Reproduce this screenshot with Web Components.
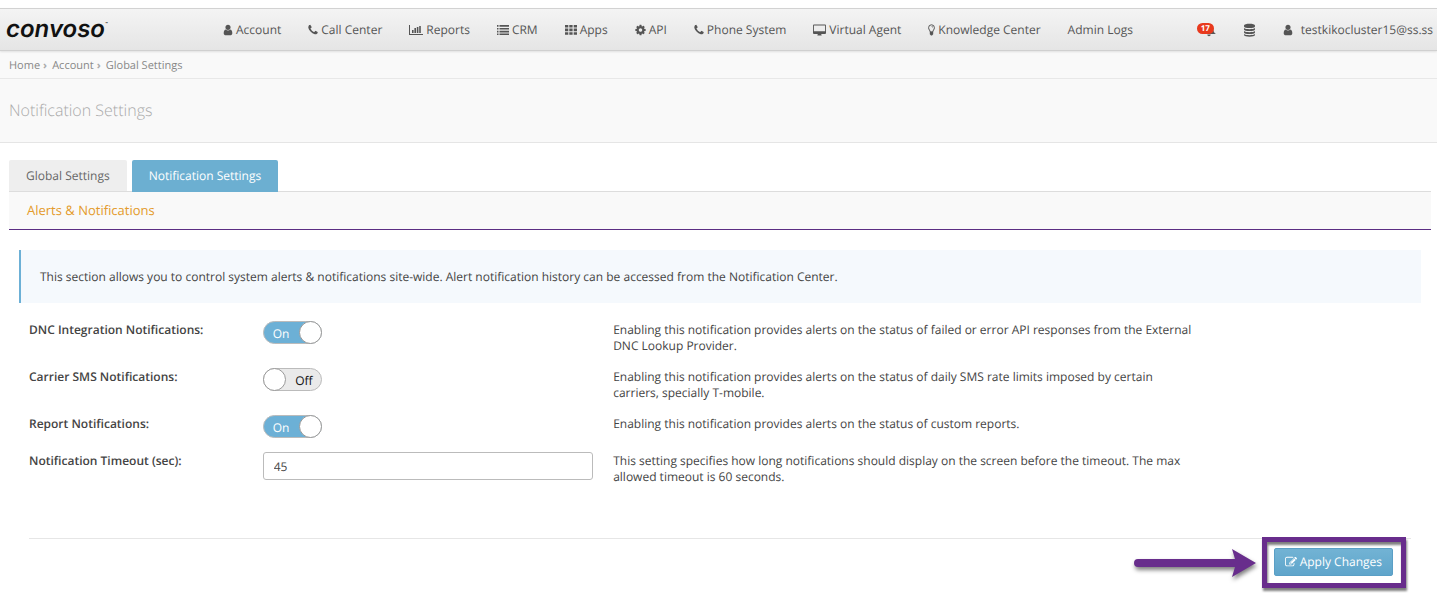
<!DOCTYPE html>
<html lang="en">
<head>
<meta charset="utf-8">
<title>Notification Settings</title>
<style>
    body {
        margin: 0;
        background: #fff;
        color: #444;
        font-family: "Open Sans", "Noto Sans", sans-serif;
        font-size: 12px;
        line-height: 16px;
        text-rendering: geometricPrecision;
    }
    app-header { margin-top: 8px; }
</style>
</head>
<body>
    <app-header>
        <nav-item icon="user">Account</nav-item>
        <nav-item icon="phone">Call Center</nav-item>
        <nav-item icon="chart">Reports</nav-item>
        <nav-item icon="list">CRM</nav-item>
        <nav-item icon="grid">Apps</nav-item>
        <nav-item icon="cog">API</nav-item>
        <nav-item icon="phone">Phone System</nav-item>
        <nav-item icon="desktop">Virtual Agent</nav-item>
        <nav-item icon="bulb">Knowledge Center</nav-item>
        <nav-item>Admin Logs</nav-item>
        <user-menu slot="user" count="17">testkikocluster15@ss.ss</user-menu>
    </app-header>
    <bread-crumbs>
        <a href="#">Home</a>
        <a href="#">Account</a>
        <a href="#">Global Settings</a>
    </bread-crumbs>
    <page-title>Notification Settings</page-title>
    <settings-tabs>
        <a href="#">Global Settings</a>
        <a href="#" class="active">Notification Settings</a>
        <a href="#" slot="sub">Alerts &amp; Notifications</a>
    </settings-tabs>
    <settings-panel>
        <info-note slot="note">This section allows you to control system alerts &amp; notifications site-wide. Alert notification history can be accessed from the Notification Center.</info-note>
        <setting-row type="switch" label="DNC Integration Notifications:" on>Enabling this notification provides alerts on the status of failed or error API responses from the External DNC Lookup Provider.</setting-row>
        <setting-row type="switch" label="Carrier SMS Notifications:">Enabling this notification provides alerts on the status of daily SMS rate limits imposed by certain carriers, specially T-mobile.</setting-row>
        <setting-row type="switch" label="Report Notifications:" on>Enabling this notification provides alerts on the status of custom reports.</setting-row>
        <setting-row type="text" label="Notification Timeout (sec):" value="45">This setting specifies how long notifications should display on the screen before the timeout. The max allowed timeout is 60 seconds.</setting-row>
        <action-bar slot="actions">Apply Changes</action-bar>
    </settings-panel>

<script>
const ICONS = {
    user: [ '256 0 1280 1792', 10, '<path d="M1536 1399q0 109-62.5 187t-150.5 78h-854q-88 0-150.5-78t-62.5-187q0-85 8.5-160.5t31.5-152 58.5-131 94-89 134.5-34.5q131 128 313 128t313-128q76 0 134.5 34.5t94 89 58.5 131 31.5 152 8.5 160.5zm-256-887q0 159-112.5 271.5t-271.5 112.5-271.5-112.5-112.5-271.5 112.5-271.5 271.5-112.5 271.5 112.5 112.5 271.5z"/>' ],
    phone: [ '192 0 1408 1792', 10, '<path d="M1600 1240q0 27-10 70.5t-21 68.5q-21 50-122 106-94 51-186 51-27 0-53-3.5t-57.5-12.5-47-14.5-55.5-20.5-49-18q-98-35-175-83-127-79-264-216t-216-264q-48-77-83-175-3-9-18-49t-20.5-55.5-14.5-47-12.5-57.5-3.5-53q0-92 51-186 56-101 106-122 25-11 68.5-21t70.5-10q14 0 21 3 18 6 53 76 11 19 30 54t35 63.5 31 53.5q3 4 17.5 25t21.5 35.5 7 28.5q0 20-28.5 50t-62 55-62 53-28.5 46q0 9 5 22.5t8.5 20.5 14 24 11.5 19q76 137 174 235t235 174q2 1 19 11.5t24 14 20.5 8.5 22.5 5q18 0 46-28.5t53-62 55-62 50-28.5q14 0 28.5 7t35.5 21.5 25 17.5q25 15 53.5 31t63.5 35 54 30q70 35 76 53 3 7 3 21z"/>' ],
    cog: [ '128 0 1536 1792', 11, '<path d="M1152 896q0-106-75-181t-181-75-181 75-75 181 75 181 181 75 181-75 75-181zm512-109v222q0 12-8 23t-20 13l-185 28q-19 54-39 91 35 50 107 138 10 12 10 25t-9 23q-27 37-99 108t-94 71q-12 0-26-9l-138-108q-44 23-91 38-16 136-29 186-7 28-36 28h-222q-14 0-24.5-8.5t-11.5-21.5l-28-184q-49-16-90-37l-141 107q-10 9-25 9-14 0-25-11-126-114-165-168-7-10-7-23 0-12 8-23 15-21 51-66.5t54-70.5q-27-50-41-99l-183-27q-13-2-21-12.5t-8-23.5v-222q0-12 8-23t19-13l186-28q14-46 39-92-40-57-107-138-10-12-10-24 0-10 9-23 26-36 98.5-107.5t94.5-71.5q13 0 26 10l138 107q44-23 91-38 16-136 29-186 7-28 36-28h222q14 0 24.5 8.5t11.5 21.5l28 184q49 16 90 37l142-107q9-9 24-9 13 0 25 10 129 119 165 170 7 8 7 22 0 12-8 23-15 21-51 66.5t-54 70.5q26 50 41 98l183 28q13 2 21 12.5t8 23.5z"/>' ],
    edit: [ '0 0 1792 1792', 12, '<path d="M888 1184l116-116-152-152-116 116v56h96v96h56zm440-720q-16-16-33 1l-350 350q-17 17-1 33t33-1l350-350q17-17 1-33zm80 594v190q0 119-84.5 203.5t-203.5 84.5h-832q-119 0-203.5-84.5t-84.5-203.5v-832q0-119 84.5-203.5t203.5-84.5h832q63 0 117 25 15 7 18 23 3 17-9 29l-49 49q-14 14-32 8-23-6-45-6h-832q-66 0-113 47t-47 113v832q0 66 47 113t113 47h832q66 0 113-47t47-113v-126q0-13 9-22l64-64q15-15 35-7t20 29zm-96-738l288 288-672 672h-288v-288zm444 132l-92 92-288-288 92-92q28-28 68-28t68 28l152 152q28 28 28 68t-28 68z"/>' ],
    chart: [ '0 0 14 12', 14, '<path d="M0 1h1v9h13v1H0zM3 6h1.600v3H3zM5.400 4H7v5H5.400zM7.800 3h1.600v6H7.800zM10.200 2h1.600v7h-1.600z"/>' ],
    list: [ '0 0 12 12', 12, '<path d="M0 1h1.500v1.700H0zM2.500 1H12v1.700H2.500zM0 3.900h1.500v1.700H0zM2.500 3.900H12v1.700H2.500zM0 6.700h1.500v1.700H0zM2.500 6.700H12v1.700H2.500zM0 9.500h1.500v1.600H0zM2.500 9.500H12v1.600H2.500z"/>' ],
    grid: [ '0 0 12 12', 12, '<path d="M0 1h3.300v2.600H0zM4.300 1h3.300v2.600H4.300zM8.700 1H12v2.600H8.700zM0 4.600h3.300v2.600H0zM4.300 4.600h3.300v2.600H4.300zM8.700 4.600H12v2.600H8.700zM0 8.200h3.300v2.600H0zM4.300 8.200h3.300v2.600H4.300zM8.700 8.200H12v2.600H8.700z"/>' ],
    desktop: [ '0 0 13 12', 13, '<path fill-rule="evenodd" d="M1 .5h11a1 1 0 0 1 1 1v7.400a1 1 0 0 1-1 1H8.200l.5 1.600h-4.400l.5-1.600H1a1 1 0 0 1-1-1V1.500a1 1 0 0 1 1-1zM.9 1.500v5.700h11.200V1.500z"/>' ],
    bulb: [ '0 0 7 12', 7, '<path d="M2.300 8C2.200 6.500.6 5.600.6 3.700a2.900 2.900 0 0 1 5.800 0C6.400 5.600 4.800 6.500 4.700 8z" fill="none" stroke="currentColor"/><path d="M1.800 7.800h3.400v2.400L4 11.500H3l-1.200-1.300zM3.500 2.200c.9 0 1.500.5 1.500 1.300h-.6c0-.5-.4-.8-.9-.8z"/>' ],
    database: [ '0 0 11 14', 11, '<path d="M0 2.500C0 .2 11 .2 11 2.500v1C11 5.600 0 5.600 0 3.500zM0 5c1.500 1.600 9.500 1.600 11 0v1.500c0 2-11 2-11 0zM0 8c1.500 1.600 9.500 1.600 11 0v1.500c0 2-11 2-11 0zM0 11c1.500 1.600 9.500 1.600 11 0v1c0 2.300-11 2.300-11 0z"/>' ],
    bell: [ '0 0 14 14', 14, '<path d="M7 1c3 0 4.300 2 4.300 5 0 2.600 1 4 2.700 5H0c1.700-1 2.700-2.400 2.700-5C2.700 3 4 1 7 1zM5.300 11.500h3.400c0 2.200-3.400 2.200-3.400 0z"/>' ]
};

function icon( name ) {
    if( !ICONS[name] ) return '';
    const [ box, width, body ] = ICONS[name];
    return `<svg viewBox="${box}" width="${width}" height="${name === 'database' || name === 'bell' ? 14 : 12}" fill="currentColor" aria-hidden="true">${body}</svg>`;
}

class BaseElement extends HTMLElement {
    constructor() {
        super();
        this.attachShadow( { mode: 'open' } );
    }

    render() {
        const template = document.createElement( 'template' );
        template.innerHTML = `<style>${this.getStyles()}</style>${this.getMarkup()}`;
        this.shadowRoot.replaceChildren( template.content.cloneNode( true ) );
    }

    connectedCallback() { this.render() }
}

class AppHeader extends BaseElement {
    getMarkup() {
        return `
            <a class="logo" href="#" aria-label="Convoso home">convoso<sup>™</sup></a>
            <nav><slot></slot></nav>
            <slot name="user"></slot>
        `
    }

    getStyles() {
        return `
            :host {
                display: flex;
                align-items: center;
                height: 41px;
                border-top: 1px solid #d2d2d2;
                border-bottom: 1px solid #d0d0d0;
                background: linear-gradient(#f4f4f4, #e5e5e5);
                box-shadow: 0 1px 2px rgba(0,0,0,.1);
                position: relative;
            }
            .logo {
                flex: 0 0 204px;
                padding-left: 6px;
                color: #111;
                font: italic 600 24px/24px Inter, sans-serif;
                text-decoration: none;
                padding-bottom: 2px;
            }
            sup {
                font-size: 4px;
                line-height: 4px;
                vertical-align: 12px;
            }
            nav { display: flex; }
            slot[name="user"] { display: block; margin-left: auto; }
        `
    }
}

class NavItem extends BaseElement {
    getMarkup() {
        return `<a href="#">${icon( this.getAttribute('icon') )}<span><slot></slot></span></a>`
    }

    getStyles() {
        return `
            :host { display: block; }
            a {
                display: flex;
                align-items: center;
                gap: 3px;
                padding: 0 14px 0 13px;
                color: #555;
                text-decoration: none;
                white-space: nowrap;
            }
        `
    }
}

class UserMenu extends BaseElement {
    getMarkup() {
        return `
            <a class="bell" href="#" aria-label="Notifications">${icon( 'bell' )}<span class="badge">${this.getAttribute('count')}</span></a>
            <a href="#" aria-label="Data">${icon( 'database' )}</a>
            <a class="account" href="#">${icon( 'user' )}<span><slot></slot></span></a>
        `
    }

    getStyles() {
        return `
            :host {
                display: flex;
                align-items: center;
                gap: 28px;
                padding-right: 4px;
            }
            a {
                display: flex;
                align-items: center;
                color: #555;
                text-decoration: none;
            }
            .bell { position: relative; }
            .badge {
                position: absolute;
                right: 2px;
                top: 0;
                padding: 0 4px;
                border-radius: 6px;
                background: #e8391d;
                color: #fff;
                font-size: 8px;
                font-weight: 700;
                line-height: 11px;
            }
            .account { gap: 8px; }
        `
    }
}

class BreadCrumbs extends BaseElement {
    getMarkup() { return `<nav aria-label="Breadcrumb"><slot></slot></nav>` }

    getStyles() {
        return `
            :host {
                display: block;
                padding: 7px 9px 4px;
                border-bottom: 1px solid #e8e8e8;
                background: #f9f9f9;
                font-size: 11px;
            }
            nav { display: flex; }
            ::slotted(a) {
                color: #888;
                text-decoration: none;
            }
            ::slotted(a:not(:last-child))::after {
                content: "›";
                padding: 0 5px 0 3px;
                color: #aaa;
                font-weight: 700;
            }
        `
    }
}

class PageTitle extends BaseElement {
    getMarkup() { return `<h1><slot></slot></h1>` }

    getStyles() {
        return `
            :host {
                display: block;
                padding: 19px 9px 20px;
                border-bottom: 1px solid #e5e5e5;
                background: #f9f9f9;
            }
            h1 {
                margin: 0;
                color: #aaa;
                font-size: 16px;
                font-weight: 300;
                line-height: 24px;
            }
        `
    }
}

class SettingsTabs extends BaseElement {
    getMarkup() {
        return `
            <div class="tabs"><slot></slot></div>
            <div class="sub"><slot name="sub"></slot></div>
        `
    }

    getStyles() {
        return `
            :host {
                display: block;
                margin: 17px 6px 0 9px;
            }
            .tabs {
                display: flex;
                gap: 5px;
                border-bottom: 1px solid #ddd;
            }
            ::slotted(a) {
                padding: 8px 17px 7px;
                border-radius: 2px 2px 0 0;
                background: #eee;
                color: #666;
                text-decoration: none;
            }
            ::slotted(a.active) {
                margin-bottom: -1px;
                padding-bottom: 8px;
                background: #6cafd1;
                color: #fff;
            }
            .sub {
                display: flex;
                border-bottom: 1px solid #5b2d83;
                background: #f9f9f9;
            }
            ::slotted([slot="sub"]) {
                padding: 10px 18px 11px;
                background: none;
                color: #e49b2b;
                font-size: 13px;
            }
        `
    }
}

class SettingsPanel extends BaseElement {
    getMarkup() {
        return `
            <slot name="note"></slot>
            <form><slot></slot></form>
            <slot name="actions"></slot>
        `
    }

    getStyles() {
        return `
            :host {
                display: block;
                padding: 20px 16px 24px 19px;
            }
            form {
                display: grid;
                gap: 14px;
                margin-top: 18px;
            }
        `
    }
}

class InfoNote extends BaseElement {
    getMarkup() { return `<slot></slot>` }

    getStyles() {
        return `
            :host {
                display: block;
                padding: 19px 19px 18px;
                border-left: 2px solid #6cb0d6;
                background: #f5f9fd;
            }
        `
    }
}

class SettingRow extends BaseElement {
    getMarkup() {
        return `
            <label for="field">${this.getAttribute('label')}</label>
            <div class="field">${this.getControl()}</div>
            <div class="text"><slot></slot></div>
        `
    }

    getControl() {
        if( this.getAttribute('type') === 'text' ) {
            return `<input id="field" type="text" value="${this.getAttribute('value')}">`
        }
        return `
            <label class="switch">
                <input id="field" type="checkbox" role="switch" ${this.hasAttribute('on') ? 'checked' : ''}>
                <span class="state">${this.hasAttribute('on') ? 'On' : 'Off'}</span>
                <span class="knob"></span>
            </label>
        `
    }

    handleChange( event ) {
        this.shadowRoot.querySelector('.state').textContent = event.target.checked ? 'On' : 'Off';
    }

    connectedCallback() {
        this.render();
        const box = this.shadowRoot.querySelector('input[type="checkbox"]');
        if( box ) box.addEventListener( 'change', e => this.handleChange( e ) );
    }

    getStyles() {
        return `
            :host {
                display: grid;
                grid-template-columns: 2fr 3fr 7fr;
                align-items: start;
            }
            label, .text { padding: 1px 10px 0; }
            .text { max-width: 580px; }
            label { font-weight: 600; }
            .field { padding: 0 10px; }
            input[type="text"] {
                display: block;
                box-sizing: border-box;
                width: 100%;
                height: 28px;
                padding: 1px 10px 0;
                border: 1px solid #bbb;
                border-radius: 3px;
                background: #fff;
                color: #444;
                font: inherit;
                text-rendering: inherit;
            }
            .switch {
                display: flex;
                align-items: center;
                justify-content: space-between;
                flex-direction: row-reverse;
                box-sizing: border-box;
                width: 59px;
                height: 23px;
                padding: 0;
                border: 1px solid #bbb;
                border-radius: 12px;
                background: #eaeaea;
                color: #111;
                font-weight: 400;
                cursor: pointer;
            }
            .switch input {
                position: absolute;
                opacity: 0;
                margin: 0;
            }
            .switch:has(:checked) {
                flex-direction: row;
                background: #6cb0d6;
                color: #fff;
            }
            .state { padding: 2px 8px 0 9px; }
            .knob {
                box-sizing: border-box;
                width: 23px;
                height: 23px;
                margin: -1px;
                border: 1px solid #999;
                border-radius: 50%;
                background: #fff;
            }
        `
    }
}

class ActionBar extends BaseElement {
    getMarkup() {
        return `
            <svg class="arrow" width="132" height="36" viewBox="0 0 132 36" aria-hidden="true">
                <path d="M8 15h97L102 5l24 14-24 14 3-10H8a4 4 0 0 1 0-8z" fill="#682d8c"/>
            </svg>
            <div class="marked">
                <button type="button">${icon( 'edit' )}<span><slot></slot></span></button>
            </div>
        `
    }

    getStyles() {
        return `
            :host {
                display: flex;
                align-items: center;
                justify-content: flex-end;
                gap: 12px;
                margin: 53px 10px 0;
                padding: 5px 18px 0 0;
                border-top: 1px solid #e6e6e6;
            }
            .arrow { filter: drop-shadow(1px 3px 2px rgba(0,0,0,.5)); }
            .marked { position: relative; }
            .marked::before {
                content: "";
                position: absolute;
                inset: -11px -13px -12px -12px;
                border: 5px solid #682d8c;
                filter: drop-shadow(1px 3px 1px rgba(0,0,0,.5));
                pointer-events: none;
            }
            button {
                display: flex;
                align-items: center;
                gap: 3px;
                height: 28px;
                padding: 0 10px;
                border: 1px solid #5a9fc6;
                border-radius: 2px;
                background: linear-gradient(#72b3d4, #5fa5cb);
                color: #fff;
                font: inherit;
                text-rendering: inherit;
            }
        `
    }
}

customElements.define( 'app-header', AppHeader );
customElements.define( 'nav-item', NavItem );
customElements.define( 'user-menu', UserMenu );
customElements.define( 'bread-crumbs', BreadCrumbs );
customElements.define( 'page-title', PageTitle );
customElements.define( 'settings-tabs', SettingsTabs );
customElements.define( 'settings-panel', SettingsPanel );
customElements.define( 'info-note', InfoNote );
customElements.define( 'setting-row', SettingRow );
customElements.define( 'action-bar', ActionBar );
</script>
</body>
</html>
